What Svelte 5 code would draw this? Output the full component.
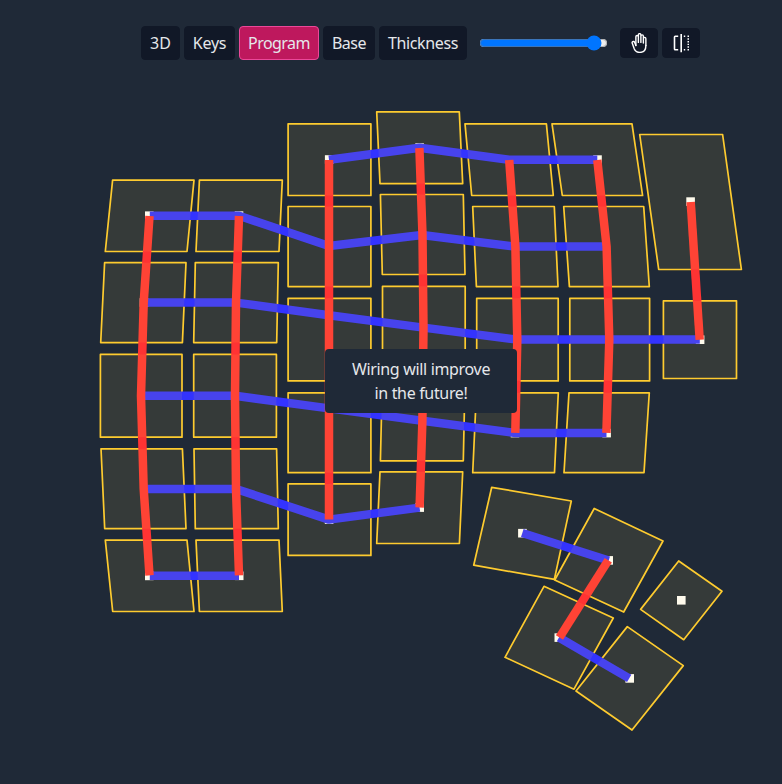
<script>
  // label, button width and tracking of each tab
  const tabs = [
    ['3D', 39, 0],
    ['Keys', 51, -0.2],
    ['Program', 80, -0.55],
    ['Base', 52, -0.5],
    ['Thickness', 88, -0.35]
  ];
  let active = $state('Program');
  let zoom = $state(95);

  // outline of every key cap, clockwise from the top left corner
  const keys = [
    '112.6,180.2 194,180.2 187,251.5 105.3,251.5',
    '104.6,262.7 186,262.7 182.4,342.6 100.7,342.6',
    '100.4,354.4 182,354.4 182,437.2 100.4,437.2',
    '101,448.8 182.4,448.8 186,528.7 104.7,528.7',
    '105.3,540.1 187,540.1 194,611.5 112.7,611.5',
    '199.4,180.2 282.3,180.2 279,251.5 196,251.5',
    '195.3,262.7 278.3,262.7 276.7,342.6 193.7,342.6',
    '193.7,354.4 276.4,354.4 276.4,437.2 193.7,437.2',
    '194,448.8 276.6,448.8 278.3,528.7 195.3,528.7',
    '196,540.1 279,540.1 282.3,611.5 199.4,611.5',
    '288.1,123.8 370.9,123.8 370.9,195.5 288.1,195.5',
    '288.1,206.5 370.9,206.5 370.9,286.6 288.1,286.6',
    '288.1,298.3 370.9,298.3 370.9,380.9 288.1,380.9',
    '288.1,392.8 370.9,392.8 370.9,472.7 288.1,472.7',
    '288.1,483.9 370.9,483.9 370.9,555.4 288.1,555.4',
    '376.7,111.8 459.3,111.8 462.7,183.6 380,183.6',
    '380.4,194.5 463.3,194.5 465,274.5 382.3,274.5',
    '382.5,286.3 465.2,286.3 465.2,368.8 382.5,368.8',
    '382.3,380.7 465,380.7 463.3,460.8 380.4,460.8',
    '380,471.8 462.7,471.8 459.4,543.5 376.7,543.5',
    '465,123.8 546.4,123.8 553.3,195.5 471.7,195.5',
    '472.7,206.5 554.3,206.5 558,286.6 476.4,286.6',
    '476.7,298.3 558.2,298.3 558.2,380.9 476.7,380.9',
    '476.4,392.8 558.3,392.8 554.5,472.7 472.7,472.7',
    '552,123.8 632,123.8 642.6,195.5 562.3,195.5',
    '563.7,206.5 643.7,206.5 649.3,286.6 569.4,286.6',
    '569.8,298.3 649.6,298.3 649.6,380.9 569.8,380.9',
    '569,392.8 649.3,392.8 644,472.7 564,472.7',
    '639.7,134.5 722.6,134.5 741.4,269.5 658.7,269.5',
    '663.4,300.8 736.5,300.8 736.5,378.5 663.4,378.5',
    '491.7,487.3 571.3,501 554.4,579.3 473.7,565.2',
    '594.2,508.5 663,541 623.7,612 554.7,580',
    '544,586.3 613.3,618 574,689.2 505,657.3',
    '627.3,626.6 683.3,665.6 632,730 576,691',
    '678.7,561 722,591.3 683.7,639.7 640.6,609.4'
  ];

  const rows = [
    '329,159.7 419.5,147.8 509,159.7 597.3,159.7',
    '149.8,215.8 239,215.8 329,246 422,235 515.5,246.6 606.5,246.6',
    '143.7,302.6 236,302.6 329,315.2 423.5,327.6 517,339.6 609,339.6 699.8,339.6',
    '141,395.8 235,395.8 329,408.4 422.4,420.8 515.3,433 606.5,433',
    '143.7,489 236,489 329,519.6 419.6,507.6',
    '149.8,575.8 239,575.8',
    '522.3,533 608.7,560.5',
    '559,637.5 629.2,678.3'
  ];

  const columns = [
    '149.5,216 143.7,302.6 141,395.8 143.7,489 149.5,575.4',
    '239,216 236,302.6 235,395.8 236,489 239,575.4',
    '329,160 329,519.5',
    '419.4,148 422.5,235 423.5,327.6 422.4,420.8 419.6,507.5',
    '509.2,160 515.4,246.6 517.3,339.6 515.3,432.8',
    '597.3,160 606.6,246.6 609.3,339.6 606.4,432.8',
    '690.7,202 699.7,339.8',
    '608.3,560.3 559.5,637.5'
  ];

  const pins = [
    [149.3, 215.7], [144, 302.5], [149.3, 575.9],
    [239, 215.6], [239.2, 575.8],
    [329.2, 159.5], [329.1, 519.6],
    [419.6, 147.6], [419.7, 507.6],
    [515, 433.1],
    [597.5, 159.6], [606.6, 433.1],
    [690.6, 201.6], [700.1, 339.7],
    [522.4, 533.2], [608.7, 560.4], [558.8, 637.6], [629.7, 678.4], [681.3, 600.3]
  ];
</script>

<main>
  <svg class="board" viewBox="0 0 782 784">
    {#each keys as k}<polygon class="outline" points={k} />{/each}
    {#each pins as [x, y]}<rect class="pin" x={x - 4.3} y={y - 4.3} width="8.6" height="8.6" />{/each}
    {#each rows as r}<polyline class="row" points={r} />{/each}
    {#each columns as c}<polyline class="column" points={c} />{/each}
    {#each keys as k}<polygon class="tint" points={k} />{/each}
  </svg>

  <header>
    <nav>
      {#each tabs as [label, width, tracking]}
        <button
          class="tab"
          class:active={active === label}
          style="width: {width}px; letter-spacing: {tracking}px"
          onclick={() => (active = label)}>{label}</button>
      {/each}
    </nav>
    <input type="range" min="0" max="100" bind:value={zoom} aria-label="Zoom" />
    <div class="tools">
      <button class="tool" aria-label="Pan">
        <svg viewBox="0 0 512 512" width="20" height="20">
          <g transform="translate(512 0) scale(-1 1)" fill="none" stroke="currentColor" stroke-width="36" stroke-linecap="round" stroke-linejoin="round">
            <path d="M80 320V144a32 32 0 0132-32h0a32 32 0 0132 32v112M144 256V80a32 32 0 0132-32h0a32 32 0 0132 32v160M272 241V96a32 32 0 0132-32h0a32 32 0 0132 32v224M208 240V48a32 32 0 0132-32h0a32 32 0 0132 32v192" />
            <path d="M80 320c0 117.4 64 176 152 176s123.71-39.6 144-88l52.71-144c6.66-18.05 3.64-34.79-11.87-43.6h0c-15.52-8.82-35.91-4.28-44.31 11.68L336 320" />
          </g>
        </svg>
      </button>
      <button class="tool" aria-label="Mirror">
        <svg viewBox="0 0 20 20" width="20" height="20" fill="none" stroke="currentColor" stroke-width="1.6">
          <path d="M7.2 3.2H4.2a.7.7 0 0 0-.7.7v12.2a.7.7 0 0 0 .7.7h3M10.2 1v18.2" />
          <path stroke-width="1.4" d="M12.8 3.3h1.4M12.8 16.7h1.4M16.5 3.3h1.5M16.5 6h1.5M16.5 8.7h1.5M16.5 11.4h1.5M16.5 14h1.5M16.5 16.7h1.5" />
        </svg>
      </button>
    </div>
  </header>

  <p class="notice">Wiring will improve<br />in the future!</p>
</main>

<style>
  :global(body) {
    margin: 0;
    background: #1f2937;
  }
  main {
    position: relative;
    width: 782px;
    height: 784px;
    overflow: hidden;
    background: #1f2937;
    color: #e5e7eb;
    font: 16px/24px 'Noto Sans', sans-serif;
  }
  .board {
    position: absolute;
    inset: 0;
    width: 782px;
    height: 784px;
  }
  .outline {
    fill: none;
    stroke: #fecb2e;
    stroke-width: 1.7;
    stroke-linejoin: round;
  }
  .tint {
    fill: #fcd34d;
    fill-opacity: 0.1;
  }
  .pin {
    fill: #fff;
  }
  .row,
  .column {
    fill: none;
    stroke-width: 8.5;
    stroke-linejoin: round;
  }
  .row {
    stroke: #3333ff;
  }
  .column {
    stroke: #ff3333;
  }
  header {
    position: relative;
    display: flex;
    align-items: center;
    padding: 26px 0 0 141px;
  }
  nav,
  .tools {
    display: flex;
    gap: 4px;
  }
  button {
    box-sizing: border-box;
    margin: 0;
    border: 1px solid #111827;
    border-radius: 4px;
    background: #111827;
    color: inherit;
    font: inherit;
  }
  .tab {
    padding: 4px 0;
    white-space: nowrap;
  }
  .tab.active {
    border-color: #ec4899;
    background: #be185d;
  }
  input {
    width: 129px;
    height: 16px;
    margin: 0 12px;
  }
  .tool {
    display: flex;
    align-items: center;
    justify-content: center;
    width: 38px;
    height: 30px;
    padding: 0;
    color: #fff;
  }
  .notice {
    position: absolute;
    left: 325px;
    top: 349px;
    box-sizing: border-box;
    width: 192px;
    margin: 0;
    padding: 8px 16px;
    border-radius: 4px;
    background: #1f2937;
    letter-spacing: -0.33px;
    text-align: center;
  }
</style>
